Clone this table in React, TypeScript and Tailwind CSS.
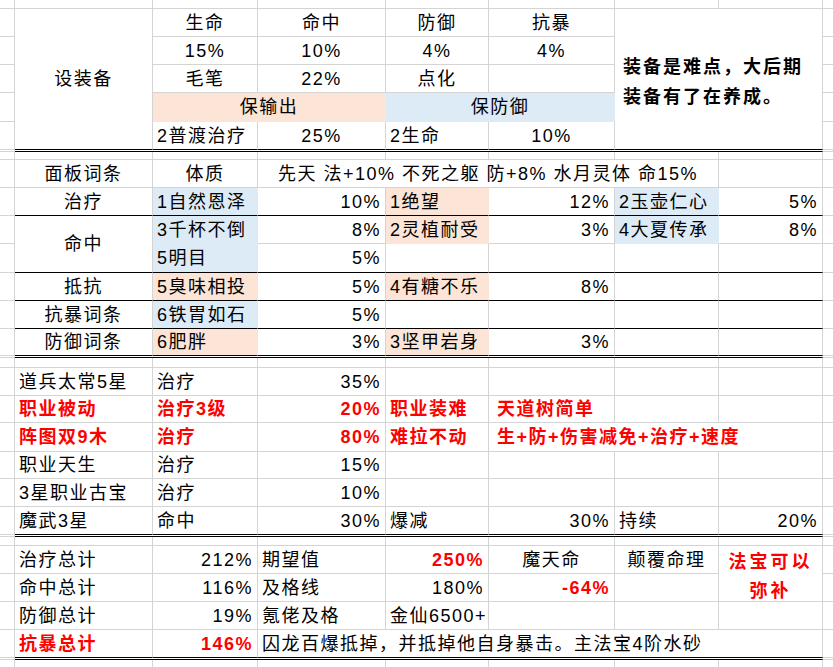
import clsx from 'clsx';
import type { ReactNode } from 'react';

type CellProps = {
  t?: ReactNode;
  c?: string;
  k?: boolean; // black bottom border
  f?: 'p' | 'b'; // fill: peach / blue
  a?: 'l' | 'c' | 'r';
  red?: boolean;
};

function Cell({ t, c, k, f, a = 'l', red }: CellProps) {
  return (
    <div
      className={clsx(
        'flex items-center whitespace-nowrap px-[4px] border-r border-b leading-[22px]',
        f === 'p' && 'bg-[#fce4d6] border-r-transparent',
        f === 'b' && 'bg-[#ddebf7] border-r-transparent',
        !f && 'border-r-[#d4d4d4]',
        k ? 'border-b-black' : f ? 'border-b-transparent' : 'border-b-[#d4d4d4]',
        a === 'c' && 'justify-center',
        a === 'r' && 'justify-end',
        a === 'l' && 'justify-start',
        red && 'text-[#ff0000] font-bold',
        c
      )}
    >
      {t}
    </div>
  );
}

const E: CellProps = {};
const K: CellProps = { k: true };

// every row carries the narrow column A in front and column I at the end
const edge = (cells: CellProps[]) => [E, ...cells, E];
const blank = edge([E, E, E, E, E, E, E]);
const dbl = edge([{ c: 'col-span-7', k: true }]);

const note = (
  <div className="flex flex-col font-bold text-[18px] tracking-[2px] leading-[30px] pt-[6px] pl-[4px]">
    <span>装备是难点，大后期</span>
    <span>装备有了在养成。</span>
  </div>
);

const fix = (
  <div className="flex flex-col items-center leading-[29px] text-[18px] tracking-[3px] pt-[6px]">
    <span>法宝可以</span>
    <span>弥补</span>
  </div>
);

const rows: CellProps[][] = [
  blank,
  edge([
    { t: '设装备', c: 'row-span-5', a: 'c', k: true },
    { t: '生命', a: 'c' },
    { t: '命中', a: 'c' },
    { t: '防御', a: 'c' },
    { t: '抗暴', a: 'c' },
    { t: note, c: 'col-span-2 row-span-5', k: true },
  ]),
  edge([
    { t: '15%', a: 'c' },
    { t: '10%', a: 'c' },
    { t: '4%', a: 'c' },
    { t: '4%', a: 'c' },
  ]),
  edge([{ t: '毛笔', a: 'c' }, { t: '22%', a: 'c' }, { t: '点化', a: 'c' }, E]),
  edge([
    { t: '保输出', c: 'col-span-2', f: 'p', a: 'c' },
    { t: '保防御', c: 'col-span-2', f: 'b', a: 'c' },
  ]),
  edge([
    { t: '2普渡治疗', k: true },
    { t: '25%', a: 'c', k: true },
    { t: '2生命', k: true },
    { t: '10%', a: 'c', k: true },
  ]),
  dbl,
  blank,
  edge([
    { t: '面板词条', a: 'c' },
    { t: '体质', a: 'c' },
    { t: '先天 法+10% 不死之躯 防+8% 水月灵体 命15%', c: 'col-span-4 pl-[20px]' },
    E,
  ]),
  edge([
    { t: '治疗', a: 'c', k: true },
    { t: '1自然恩泽', f: 'b', k: true },
    { t: '10%', a: 'r', k: true },
    { t: '1绝望', f: 'p', k: true },
    { t: '12%', a: 'r', k: true },
    { t: '2玉壶仁心', f: 'b', k: true },
    { t: '5%', a: 'r', k: true },
  ]),
  edge([
    { t: '命中', c: 'row-span-2', a: 'c', k: true },
    { t: '3千杯不倒', f: 'b' },
    { t: '8%', a: 'r' },
    { t: '2灵植耐受', f: 'p' },
    { t: '3%', a: 'r' },
    { t: '4大夏传承', f: 'b' },
    { t: '8%', a: 'r' },
  ]),
  edge([{ t: '5明目', f: 'b', k: true }, { t: '5%', a: 'r', k: true }, K, K, K, K]),
  edge([
    { t: '抵抗', a: 'c', k: true },
    { t: '5臭味相投', f: 'p', k: true },
    { t: '5%', a: 'r', k: true },
    { t: '4有糖不乐', f: 'p', k: true },
    { t: '8%', a: 'r', k: true },
    K,
    K,
  ]),
  edge([
    { t: '抗暴词条', a: 'c', k: true },
    { t: '6铁胃如石', f: 'b', k: true },
    { t: '5%', a: 'r', k: true },
    K,
    K,
    K,
    K,
  ]),
  edge([
    { t: '防御词条', a: 'c', k: true },
    { t: '6肥胖', f: 'p', k: true },
    { t: '3%', a: 'r', k: true },
    { t: '3坚甲岩身', f: 'p', k: true },
    { t: '3%', a: 'r', k: true },
    K,
    K,
  ]),
  dbl,
  blank,
  edge([{ t: '道兵太常5星' }, { t: '治疗' }, { t: '35%', a: 'r' }, E, E, E, E]),
  edge([
    { t: '职业被动', red: true },
    { t: '治疗3级', red: true },
    { t: '20%', a: 'r', red: true },
    { t: '职业装难', red: true },
    { t: '天道树简单', red: true, c: 'pl-[8px]' },
    E,
    E,
  ]),
  edge([
    { t: '阵图双9木', red: true },
    { t: '治疗', red: true },
    { t: '80%', a: 'r', red: true },
    { t: '难拉不动', red: true },
    { t: '生+防+伤害减免+治疗+速度', red: true, c: 'col-span-3 pl-[8px]' },
  ]),
  edge([{ t: '职业天生' }, { t: '治疗' }, { t: '15%', a: 'r' }, E, E, E, E]),
  edge([{ t: '3星职业古宝' }, { t: '治疗' }, { t: '10%', a: 'r' }, E, E, E, E]),
  edge([
    { t: '魔武3星', k: true },
    { t: '命中', k: true },
    { t: '30%', a: 'r', k: true },
    { t: '爆减', k: true },
    { t: '30%', a: 'r', k: true },
    { t: '持续', k: true },
    { t: '20%', a: 'r', k: true },
  ]),
  dbl,
  blank,
  edge([
    { t: '治疗总计' },
    { t: '212%', a: 'r' },
    { t: '期望值' },
    { t: '250%', a: 'r', red: true },
    { t: '魔天命', a: 'c' },
    { t: '颠覆命理', a: 'c' },
    { t: fix, c: 'row-span-2', a: 'c', red: true },
  ]),
  edge([
    { t: '命中总计' },
    { t: '116%', a: 'r' },
    { t: '及格线' },
    { t: '180%', a: 'r' },
    { t: '-64%', a: 'r', red: true },
    E,
  ]),
  edge([{ t: '防御总计' }, { t: '19%', a: 'r' }, { t: '氪佬及格' }, { t: '金仙6500+' }, E, E, E]),
  edge([
    { t: '抗暴总计', red: true, k: true },
    { t: '146%', a: 'r', red: true, k: true },
    { t: '囚龙百爆抵掉，并抵掉他自身暴击。主法宝4阶水砂', c: 'col-span-5', k: true },
  ]),
  dbl,
  blank,
];

export default function App() {
  return (
    <div className="w-[834px] h-[668px] overflow-hidden bg-white text-black text-[18px] tracking-[1.5px] font-['Liberation_Sans','Noto_Sans_CJK_SC',sans-serif]">
      <div className="grid grid-cols-[15px_138px_105px_128px_103px_126px_104px_104px_11px] grid-rows-[9px_28px_28px_28px_29px_28px_2px_8px_28px_28px_28px_29px_28px_28px_27px_2px_10px_28px_27px_29px_27px_28px_28px_2px_9px_28px_28px_28px_28px_2px_8px]">
        {rows.flatMap((row, i) => row.map((cell, j) => <Cell key={`${i}-${j}`} {...cell} />))}
      </div>
    </div>
  );
}
